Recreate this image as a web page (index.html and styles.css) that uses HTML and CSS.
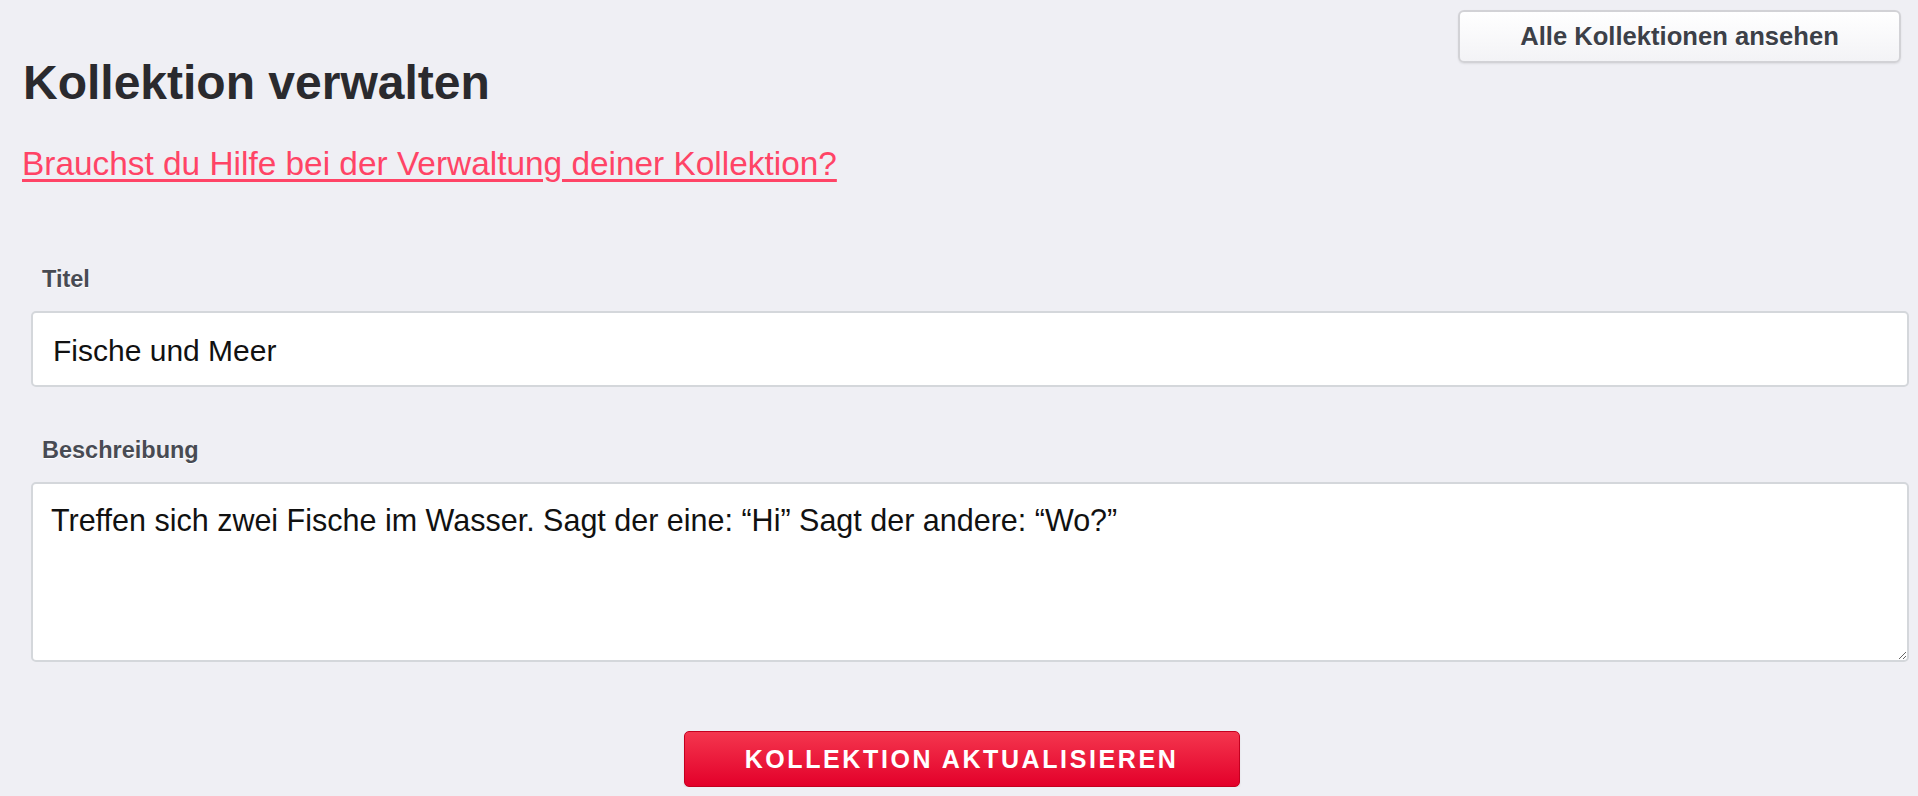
FILE: index.html
```html
<!DOCTYPE html>
<html>
<head>
    <title>Kollektion verwalten</title>
    <link rel="stylesheet" href="styles.css">
</head>
<body>
    <div class="page">
        <div class="header">
            <h1>Kollektion verwalten</h1>
            <a href="#" class="all-btn">Alle Kollektionen ansehen</a>
        </div>
        <a href="#" class="help-link">Brauchst du Hilfe bei der Verwaltung deiner Kollektion?</a>

        <form class="collection-form">
            <div class="field">
                <label for="title">Titel</label>
                <input type="text" id="title" class="text-input" value="Fische und Meer">
            </div>
            <div class="field">
                <label for="description">Beschreibung</label>
                <textarea id="description" class="text-area">Treffen sich zwei Fische im Wasser. Sagt der eine: “Hi” Sagt der andere: “Wo?”</textarea>
            </div>
        </form>

        <div class="actions">
            <button class="submit-btn">Kollektion aktualisieren</button>
        </div>
    </div>
</body>
</html>
```

FILE: styles.css
```css
body {
    margin: 0;
    font-family: 'Liberation Sans', Arial, Helvetica, sans-serif;
    background: #efeff4;
    color: #2a2a2e;
}
.page {
    padding: 10px 17px 0 22px;
}
.header {
    display: flex;
    justify-content: space-between;
    align-items: flex-start;
}
h1 {
    margin: 45px 0 0 1px;
    font-size: 48px;
    font-weight: bold;
    color: #2a2a2e;
}
.all-btn {
    box-sizing: border-box;
    width: 443px;
    height: 53px;
    display: flex;
    align-items: center;
    justify-content: center;
    font-size: 25.6px;
    font-weight: bold;
    color: #3c4048;
    text-decoration: none;
    text-shadow: 0 1px 0 #fff;
    background: linear-gradient(#ffffff, #f3f3f6);
    border: 2px solid #d2d2d6;
    border-radius: 6px;
    box-shadow: 0 1px 2px rgba(0,0,0,0.08);
}
.help-link {
    display: inline-block;
    margin-top: 35px;
    font-size: 33.4px;
    color: #ff4466;
    text-decoration: underline;
    text-decoration-thickness: 3px;
    text-underline-offset: 4px;
}
.collection-form {
    margin: 83px -8px 0 9px;
}
.field {
    margin-bottom: 50px;
}
.field:last-child {
    margin-bottom: 0;
}
.field label {
    display: block;
    margin: 0 0 18px 11px;
    font-size: 23.5px;
    font-weight: bold;
    color: #484b53;
    text-shadow: 0 1px 0 #fff;
}
.text-input,
.text-area {
    box-sizing: border-box;
    width: 100%;
    display: block;
    font-family: 'Liberation Sans', Arial, Helvetica, sans-serif;
    font-size: 30px;
    color: #111;
    background: #fff;
    border: 2px solid #d4d7db;
    border-radius: 5px;
    outline: none;
}
.text-input {
    height: 76px;
    padding: 4px 20px 0;
}
.text-area {
    height: 180px;
    padding: 19px 18px;
    font-size: 30.5px;
    resize: both;
}
.actions {
    display: flex;
    justify-content: center;
    margin-top: 69px;
}
.submit-btn {
    width: 556px;
    height: 56px;
    font-family: 'Liberation Sans', Arial, Helvetica, sans-serif;
    font-size: 25px;
    font-weight: bold;
    letter-spacing: 2.6px;
    text-transform: uppercase;
    color: #fff;
    background: linear-gradient(#f4364e, #e3002a);
    border: 1px solid #c4001f;
    border-radius: 5px;
    box-shadow: 0 2px 2px rgba(0,0,0,0.08);
    cursor: pointer;
}
```
